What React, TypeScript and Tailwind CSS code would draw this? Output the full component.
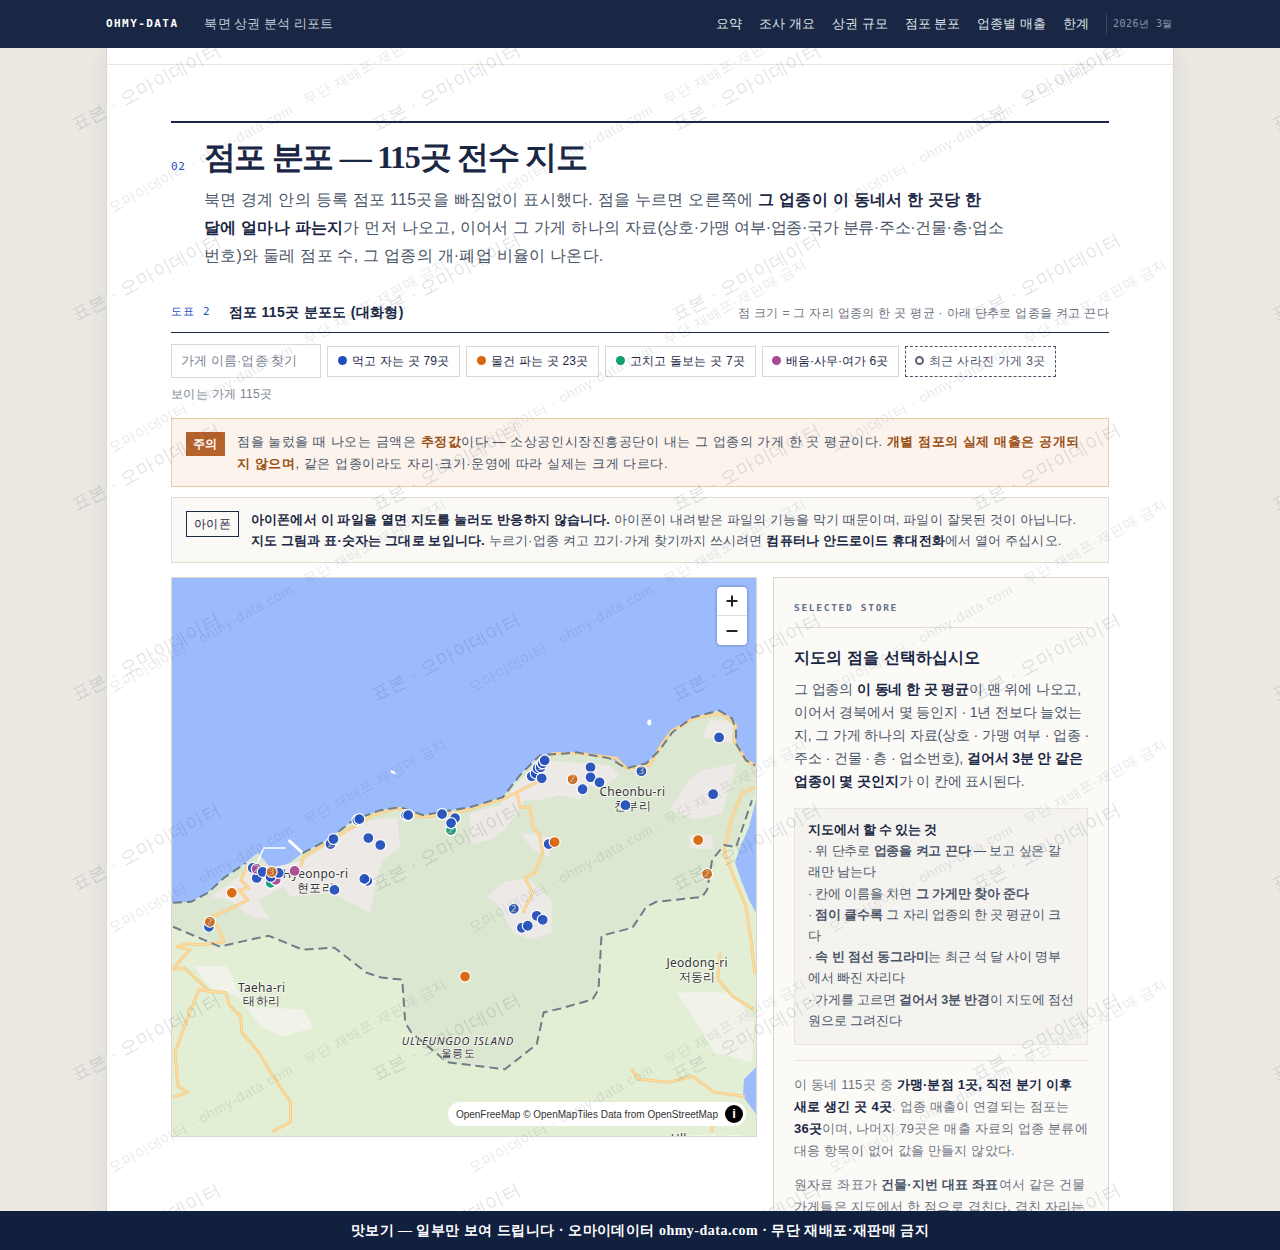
import { Minus, Plus } from 'lucide-react';

const navLinks = ['요약', '조사 개요', '상권 규모', '점포 분포', '업종별 매출', '한계'];

const chips = [
  { name: '먹고 자는 곳 79곳', dot: 'bg-[#1f4fbf]', spacing: 'tracking-[0.02em]' },
  { name: '물건 파는 곳 23곳', dot: 'bg-[#d9650b]', spacing: 'tracking-[0.02em]' },
  { name: '고치고 돌보는 곳 7곳', dot: 'bg-[#0c9f74]', spacing: 'tracking-[0.02em]' },
  { name: '배움·사무·여가 6곳', dot: 'bg-[#a94a93]', spacing: 'tracking-normal' },
];

const BLUE = '#2450bb';
const ORANGE = '#d9650b';
const GREEN = '#0c9f74';
const PURPLE = '#a94a93';

// page coordinates, the map svg uses a matching viewBox
const markers: [number, number, string, string?][] = [
  [252, 868, BLUE], [256, 878, BLUE], [256, 869, PURPLE, '2'], [262, 872, BLUE], [270, 883, GREEN],
  [275, 880, PURPLE], [270, 877, BLUE], [278, 873, BLUE], [271, 872, ORANGE, '3'], [294, 871, PURPLE],
  [231, 893, ORANGE], [208, 927, BLUE], [209, 922, ORANGE, '2'], [330, 844, BLUE, '2'], [333, 839, BLUE],
  [357, 820, BLUE], [359, 819, BLUE], [368, 838, BLUE], [380, 845, BLUE], [367, 881, BLUE], [364, 879, BLUE],
  [334, 890, BLUE], [406, 815, BLUE], [408, 815, BLUE], [442, 814, BLUE], [455, 818, BLUE],
  [451, 830, GREEN, '2'], [451, 823, BLUE],
  [532, 776, BLUE], [536, 773, BLUE], [542, 778, BLUE], [538, 768, BLUE, '2'], [541, 767, BLUE, '3'],
  [543, 763, BLUE, '2'], [545, 760, BLUE], [591, 767, BLUE], [591, 777, BLUE], [600, 782, BLUE], [583, 789, BLUE],
  [573, 779, ORANGE, '2'], [642, 771, BLUE, '3'], [626, 805, BLUE], [720, 737, BLUE], [714, 794, BLUE],
  [699, 840, ORANGE], [708, 874, ORANGE, '2'], [549, 844, BLUE], [555, 842, ORANGE], [514, 909, BLUE, '2'],
  [537, 916, BLUE], [543, 920, BLUE], [522, 928, BLUE], [528, 926, BLUE], [465, 977, ORANGE],
];

const urban = [
  '303,860 327,843 370,820 397,817 400,847 383,860 377,877 370,913 330,893 290,897 283,887 257,900 270,920 250,917 227,900 210,897 247,870 270,868',
  '470,813 500,805 520,780 540,760 570,762 610,765 620,775 600,790 590,785 580,800 560,795 540,800 525,800 505,830 490,840 470,845',
  '505,882 527,878 552,900 552,933 530,940 513,933 500,907 487,897',
  '520,832 550,837 550,857 533,850',
  '703,770 737,763 733,780 723,813 697,820 670,810 690,780',
  '710,720 733,720 733,743 703,737',
  '690,835 712,835 715,850 690,848',
];

const roads = [
  '172,970 183,968 209,992 225,993 228,1005 240,1017 241,1033 258,1053 270,1073 279,1087 290,1103 290,1123 271,1133',
  '209,992 198,990 185,1023 174,1053 177,1087 187,1093 172,1098',
  '172,970 177,963 189,950 176,947 185,944 200,945 223,942 218,930 210,917 223,912 247,900 238,890 248,888 240,880 247,866',
  '300,867 303,857 327,843 347,830 373,815 397,808 420,817 453,813 470,809 507,797 537,782 553,753 580,753 617,758 627,768 650,765 663,743 673,730 697,717 723,713 737,725 735,740 747,760 756,765',
  '517,792 520,807 530,807 533,827 540,835 543,853 535,873 525,878 533,893 523,913',
  '756,787 743,793 733,817 725,850 733,873 747,907 752,940 756,975',
  '632,1070 640,1080 670,1083 693,1077 715,1093 746,1097',
  '721,953 719,980 734,997 755,1010',
  '712,1133 716,1120 722,1118',
];

const coastDash =
  '172,903 190,902 207,893 223,878 245,863 M 302,853 327,840 353,820 380,810 400,807 423,815 440,812 470,807 503,797 520,775 540,755 577,752 610,758 627,768 647,763 660,750 673,732 693,717 720,710 733,718 737,730 737,743 747,760 756,765';

const adminDash =
  '172,927 219,947 249,940 268,936 302,950 334,948 366,973 381,978 402,980 405,1023 411,1033 447,1063 505,1070 537,1045 544,1013 561,1009 593,1000 599,990 602,936 633,928 647,907 657,902 703,897 708,890 713,860 725,845 737,847 753,800';

const labels = [
  { x: 315, y: 878, en: 'Hyeonpo-ri', ko: '현포리' },
  { x: 633, y: 796, en: 'Cheonbu-ri', ko: '천부리' },
  { x: 261, y: 992, en: 'Taeha-ri', ko: '태하리' },
  { x: 698, y: 967, en: 'Jeodong-ri', ko: '저동리' },
];

function MapDrawing() {
  return (
    <svg viewBox="171 577 586 560" className="block w-full h-full" fontFamily="'Noto Sans',sans-serif">
      <rect x="171" y="577" width="586" height="560" fill="#9cbbfd" />
      {/* land */}
      <path
        d="M171 903 L190 902 207 893 223 878 245 863 257 853 270 868 283 868 302 853 327 840 353 820 380 810 400 807 423 815 440 812 470 807 503 797 520 775 540 755 577 752 610 758 627 768 647 763 660 750 673 732 693 717 720 710 733 718 737 730 737 743 747 760 757 765 757 800 750 827 740 850 736 863 742 880 750 900 757 913 757 1068 745 1080 744 1097 757 1115 757 1137 171 1137 Z"
        fill="#e3efd4"
      />
      {/* district */}
      <path
        d="M171 903 L190 902 207 893 223 878 245 863 257 853 270 868 283 868 302 853 327 840 353 820 380 810 400 807 423 815 440 812 470 807 503 797 520 775 540 755 577 752 610 758 627 768 647 763 660 750 673 732 693 717 720 710 733 718 737 730 737 743 747 760 757 765 757 790 753 800 737 847 725 845 713 860 708 890 703 897 657 902 647 907 633 928 602 936 599 990 593 1000 561 1009 544 1013 537 1045 505 1070 447 1063 411 1033 405 1023 402 980 381 978 366 973 334 948 302 950 268 936 249 940 219 947 171 927 Z"
        fill="#dbe7d0"
      />
      {urban.map((p) => (
        <polygon key={p} points={p} fill="#ece9e6" />
      ))}
      <polygon points="193,967 226,967 245,1007 302,1010 313,1028 283,1037 260,1027 238,997 208,987" fill="#f1f3ea" />
      <polygon points="678,993 734,993 755,1023 753,1063 715,1053 697,1023" fill="#f1f3ea" />
      <polyline points="288,840 302,853" fill="none" stroke="#fff" strokeWidth="3" />
      <polyline points="257,862 263,848 285,848" fill="none" stroke="#fff" strokeWidth="1.5" />
      <ellipse cx="650" cy="722" rx="2" ry="3" fill="#fff" />
      <ellipse cx="393" cy="772" rx="3" ry="1.5" fill="#fff" transform="rotate(30 393 772)" />
      {roads.map((p) => (
        <g key={p} fill="none" strokeLinejoin="round">
          <polyline points={p} stroke="#f7cd86" strokeWidth="3" />
          <polyline points={p} stroke="#fde2b0" strokeWidth="1" />
        </g>
      ))}
      <path d={`M ${coastDash}`} fill="none" stroke="#6e7d88" strokeWidth="2" strokeDasharray="9 5" />
      <polyline points={adminDash} fill="none" stroke="#6e7d88" strokeWidth="2" strokeDasharray="9 5" />
      <g fontSize="12" textAnchor="middle" fill="#333" stroke="#fff" strokeWidth="1.5" paintOrder="stroke" strokeOpacity="0.8">
        {labels.map((l) => (
          <g key={l.en}>
            <text x={l.x} y={l.y}>{l.en}</text>
            <text x={l.x} y={l.y + 14}>{l.ko}</text>
          </g>
        ))}
        <text x="458" y="1046" fontSize="11" fontStyle="italic" letterSpacing="0.8">ULLEUNGDO ISLAND</text>
        <text x="458" y="1058" fontSize="11">울릉도</text>
        <text x="708" y="1144" fontSize="12">Ulleung-eup</text>
      </g>
      {markers.map(([x, y, c, n], i) => (
        <g key={i}>
          <circle cx={x} cy={y} r="5.5" fill={c} fillOpacity="0.95" stroke="#fff" strokeWidth="1.2" />
          {n && (
            <text x={x} y={y + 3} fontSize="9" textAnchor="middle" fill="#fff" stroke="#777" strokeWidth="0.3">
              {n}
            </text>
          )}
        </g>
      ))}
    </svg>
  );
}

// two tiled text layers over the page
const wideMarks = Array.from({ length: 7 }, (_, r) =>
  Array.from({ length: 5 }, (_, c) => ({ left: 77 + c * 300, top: 116 + r * 190 }))
).flat();
const pageMarks = Array.from({ length: 6 }, (_, r) =>
  Array.from({ length: 3 }, (_, c) => ({ left: 6 + c * 360, top: 201 + r * 240 }))
).flat();

export default function App() {
  return (
    <div className='relative h-screen overflow-hidden bg-[#ece9e3] text-[#4a5568] tracking-[0.02em] font-["Liberation_Sans",sans-serif]'>
      <header className="relative z-30 h-12 bg-[#1a2744] flex items-center justify-between pl-[106px] pr-[107px]">
        <div className="flex items-center gap-[26px]">
          <span className='font-["DejaVu_Sans_Mono",monospace] font-bold text-[11px] tracking-[0.13em] text-white'>OHMY-DATA</span>
          <span className="text-[13px] tracking-[0.005em] text-[#c4cbd8]">북면 상권 분석 리포트</span>
        </div>
        <nav className="flex items-center gap-[17px] text-[13px] tracking-normal text-[#dfe3ea]">
          {navLinks.map((name) => (
            <a key={name} href="#">{name}</a>
          ))}
          <span className='border-l border-[#3a4763] pl-[6px] h-5 leading-5 font-["DejaVu_Sans_Mono",monospace] text-[10px] tracking-[0.05em] text-[#8a94a8] whitespace-pre'>2026년 3월</span>
        </nav>
      </header>

      {/* viewport-wide watermark */}
      <div className="absolute inset-0 z-20 pointer-events-none overflow-hidden">
        {wideMarks.map((m) => (
          <span
            key={`${m.left}-${m.top}`}
            style={{ left: m.left, top: m.top }}
            className="absolute origin-bottom-left -rotate-[28deg] whitespace-nowrap leading-none text-[18px] tracking-[0.03em] text-[#1a2744]/15"
          >
            표본 · 오마이데이터
          </span>
        ))}
      </div>

      <main className="relative mx-auto w-[1068px] h-[1202px] bg-white border-x border-[#dcd8cf] shadow-[0_0_24px_rgba(26,39,68,0.08)]">
        <div className="absolute inset-0 z-20 pointer-events-none overflow-hidden">
          {pageMarks.map((m) => (
            <span
              key={`${m.left}-${m.top}`}
              style={{ left: m.left, top: m.top - 48 }}
              className="absolute origin-bottom-left -rotate-[29deg] whitespace-nowrap leading-none text-[14px] tracking-[0.05em] text-[#1a2744]/12"
            >
              오마이데이터 · ohmy-data.com · 무단 재배포·재판매 금지
            </span>
          ))}
        </div>

        <div className="h-[17px] border-b border-[#e8e4da]" />

        <section className="px-16 pt-14">
          <div className="border-t-2 border-[#1a2744] pt-[11px]">
            <div className="flex items-end gap-[18px]">
              <span className='font-["DejaVu_Sans_Mono",monospace] text-[11px] tracking-[0.06em] text-[#1f4fbf] pb-[5px]'>02</span>
              <h2 className='font-["Liberation_Serif",serif] font-bold text-[32px] leading-[46px] tracking-[-1.3px] text-[#1a2744]'>
                점포 분포 — 115곳 전수 지도
              </h2>
            </div>
            <p className="ml-[33px] mt-[6px] w-[830px] text-[16px] leading-[28px] tracking-[0.016em]">
              북면 경계 안의 등록 점포 115곳을 빠짐없이 표시했다. 점을 누르면 오른쪽에{' '}
              <strong className="text-[#1a2744]">그 업종이 이 동네서 한 곳당 한<br />달에 얼마나 파는지</strong>가 먼저 나오고, 이어서 그 가게 하나의 자료<span className="tracking-[-0.02em]">(상호·가맹 여부·업종·국가 분류·주소·건물·층·업소</span><br />번호)와 둘레 점포 수, 그 업종의 개·폐업 비율이 나온다.
            </p>
          </div>

          <div className="mt-[30px] flex items-center justify-between h-[33px] border-b border-[#1a2744] pb-[7px]">
            <div className="flex items-center gap-[18px]">
              <span className='font-["DejaVu_Sans_Mono",monospace] text-[11px] tracking-[0.1em] text-[#1f4fbf] whitespace-pre'>도표 2</span>
              <span className="text-[14px] font-bold text-[#1a2744]">점포 115곳 분포도 (대화형)</span>
            </div>
            <span className="text-[12px] text-[#6b7280]">점 크기 = 그 자리 업종의 한 곳 평균 · 아래 단추로 업종을 켜고 끈다</span>
          </div>

          <div className="mt-[11px] flex items-center gap-[6px]">
            <div className="w-[150px] h-[34px] border border-[#ddd8ce] flex items-center px-[9px] text-[12.5px] tracking-[0.01em] text-[#7b8494]">
              가게 이름·업종 찾기
            </div>
            {chips.map((chip) => (
              <span key={chip.name} className={`h-[31px] border border-[#ddd8ce] flex items-center gap-[5px] px-[9.5px] pb-px text-[12px] text-[#1a2744] ${chip.spacing}`}>
                <span className={`w-[9px] h-[9px] rounded-full ${chip.dot}`} />
                {chip.name}
              </span>
            ))}
            <span className="h-[31px] border border-dashed border-[#4a5568] flex items-center gap-[5px] px-[9.5px] pb-px text-[12px] text-[#4a5568]">
              <span className="w-[9px] h-[9px] rounded-full border-2 border-[#5b6472]" />
              최근 사라진 가게 3곳
            </span>
          </div>
          <p className="mt-[7px] text-[12px] leading-[18px] text-[#7b8494]">보이는 가게 115곳</p>

          <div className="mt-[15px] h-[69px] border border-[#e8c9a8] bg-[#fbf3ec] flex items-start gap-3 pl-[14px] pr-4 pt-[11px]">
            <span className="mt-[2px] shrink-0 w-[39px] h-6 bg-[#b8622b] text-white text-[12px] font-bold flex items-center justify-center">주의</span>
            <p className="pt-px text-[13px] leading-[22px] tracking-[0.043em]">
              점을 눌렀을 때 나오는 금액은 <strong className="text-[#9a4f14]">추정값</strong>이다 — 소상공인시장진흥공단이 내는 그 업종의 가게 한 곳 평균이다.{' '}
              <strong className="text-[#9a4f14]">개별 점포의 실제 매출은 공개되<br />지 않으며</strong>, 같은 업종이라도 자리·크기·운영에 따라 실제는 크게 다르다.
            </p>
          </div>

          <div className="mt-[10px] h-[66px] border border-[#e2ddd2] bg-[#faf9f6] flex items-start gap-3 pl-[14px] pr-4 pt-[11px]">
            <span className="mt-[2px] shrink-0 w-[53px] h-[26px] border border-[#1a2744] text-[#1a2744] text-[12px] flex items-center justify-center">아이폰</span>
            <p className="text-[13px] leading-[21px] tracking-[0.012em]">
              <strong className="text-[#1a2744]">아이폰에서 이 파일을 열면 지도를 눌러도 반응하지 않습니다.</strong> 아이폰이 내려받은 파일의 기능을 막기 때문이며, 파일이 잘못된 것이 아닙니다.{' '}
              <strong className="text-[#1a2744]">지도 그림과 표·숫자는 그대로 보입니다.</strong> 누르기·업종 켜고 끄기·가게 찾기까지 쓰시려면 <strong className="text-[#1a2744]">컴퓨터나 안드로이드 휴대전화</strong>에서 열어 주십시오.
            </p>
          </div>

          <div className="mt-[14px] flex items-start gap-4">
            <div className="relative w-[586px] h-[560px] shrink-0 overflow-hidden border border-[#ddd8ce]">
              <MapDrawing />
              <div className="absolute top-[9px] right-[9px] w-[30px] rounded bg-white shadow-[0_0_0_2px_rgba(0,0,0,0.1)] text-[#222]">
                <div className="h-[29px] flex items-center justify-center border-b border-[#ddd]">
                  <Plus size={16} strokeWidth={3} />
                </div>
                <div className="h-[29px] flex items-center justify-center">
                  <Minus size={16} strokeWidth={3} />
                </div>
              </div>
              <div className="absolute right-[10px] bottom-[10px] h-6 pl-2 pr-[2px] rounded-full bg-white flex items-center gap-[7px] text-[10px] tracking-normal text-[#333] font-['Liberation_Sans',sans-serif] whitespace-nowrap">
                <span>OpenFreeMap © OpenMapTiles Data from OpenStreetMap</span>
                <span className="w-[18px] h-[18px] mr-[1px] rounded-full bg-black text-white text-[13px] font-bold flex items-center justify-center">i</span>
              </div>
            </div>

            <aside className="flex-1 border border-[#ddd6c8] bg-[#fbfaf7] px-5 pt-[23px] pb-10 text-[14px] leading-[23px] tracking-normal">
              <div className='font-["DejaVu_Sans_Mono",monospace] text-[9.5px] leading-[14px] font-bold tracking-[0.18em] text-[#64708a] pb-[12px] border-b border-[#e2ddd2]'>
                SELECTED STORE
              </div>
              <h3 className="mt-[18px] text-[15.5px] leading-[24px] tracking-[0.01em] font-bold text-[#1a2744]">지도의 점을 선택하십시오</h3>
              <p className="mt-[8px] -mr-[8px] tracking-[-0.01em]">
                그 업종의 <strong className="text-[#1a2744]">이 동네 한 곳 평균</strong>이 맨 위에 나오고,<br />이어서 경북에서 몇 등인지 · 1년 전보다 늘었는<br />지, 그 가게 하나의 자료(상호 · 가맹 여부 · 업종 ·<br />주소 · 건물 · 층 · 업소번호), <strong className="text-[#1a2744]">걸어서 3분 안 같은<br />업종이 몇 곳인지</strong>가 이 칸에 표시된다.
              </p>
              <div className="mt-[15px] border border-[#e8e5de] bg-[#f4f3ef] pl-[13px] pr-[4px] pt-[11px] pb-[12px] text-[12.5px] leading-[21.2px] tracking-[-0.01em]">
                <strong className="block text-[#1a2744]">지도에서 할 수 있는 것</strong>
                <p>· 위 단추로 <strong>업종을 켜고 끈다</strong> — 보고 싶은 갈<br />래만 남는다</p>
                <p>· 칸에 이름을 치면 <strong>그 가게만 찾아 준다</strong></p>
                <p>· <strong>점이 클수록</strong> 그 자리 업종의 한 곳 평균이 크<br />다</p>
                <p>· <strong>속 빈 점선 동그라미</strong>는 최근 석 달 사이 명부<br />에서 빠진 자리다</p>
                <p>· 가게를 고르면 <strong>걸어서 3분 반경</strong>이 지도에 점선<br />원으로 그려진다</p>
              </div>
              <div className="mt-[15px] pt-[13px] border-t border-[#e8e5de] text-[13px] leading-[22px] tracking-[0.015em] text-[#6b7280]">
                <p>
                  이 동네 115곳 중 <strong className="text-[#1a2744]">가맹·분점 1곳, 직전 분기 이후 새로 생긴 곳 4곳</strong>. 업종 매출이 연결되는 점포는 <strong className="text-[#1a2744]">36곳</strong>이며, 나머지 79곳은 매출 자료의 업종 분류에 대응 항목이 없어 값을 만들지 않았다.
                </p>
                <p className="mt-[12px]">
                  원자료 좌표가 <strong className="text-[#4a5568]">건물·지번 대표 좌표</strong>여서 같은 건물 가게들은 지도에서 한 점으로 겹친다. 겹친 자리는 숫자로 표시된다.
                </p>
              </div>
            </aside>
          </div>
        </section>
      </main>

      <footer className='absolute z-30 inset-x-0 bottom-0 h-[39px] bg-[#12203f] flex items-center justify-center font-["Liberation_Serif",serif] text-[14px] tracking-[0.035em] font-bold text-white'>
        맛보기 — 일부만 보여 드립니다 · 오마이데이터 ohmy-data.com · 무단 재배포·재판매 금지
      </footer>
    </div>
  );
}
